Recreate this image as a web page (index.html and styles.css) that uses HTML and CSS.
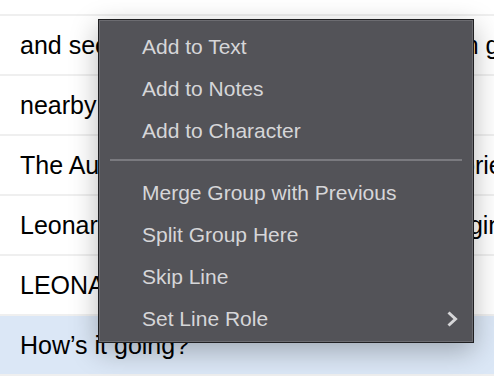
FILE: index.html
```html
<!DOCTYPE html>
<html>

<head>
    <title>Script Lines</title>
    <meta name="viewport" content="width=device-width, initial-scale=1.0">
    <link rel="stylesheet" href="styles.css">
</head>

<body>
    <div class="line-list">
        <div class="line-row">and see what was going on in the canyon gorge below</div>
        <div class="line-row">nearby and watched quietly</div>
        <div class="line-row">The Automated Theatre of Wonderful Stories</div>
        <div class="line-row">Leonard looks all around as the show begins</div>
        <div class="line-row">LEONARD</div>
        <div class="line-row selected">How’s it going?</div>
    </div>

    <!-- context menu over the selected line -->
    <div class="context-menu">
        <div class="menu-item">Add to Text</div>
        <div class="menu-item">Add to Notes</div>
        <div class="menu-item">Add to Character</div>
        <div class="menu-separator"></div>
        <div class="menu-item">Merge Group with Previous</div>
        <div class="menu-item">Split Group Here</div>
        <div class="menu-item">Skip Line</div>
        <div class="menu-item has-submenu">
            <span>Set Line Role</span>
            <svg class="chevron" width="14" height="18" viewBox="0 0 14 18">
                <path d="M3.5 2.5 L10.5 9 L3.5 15.5" fill="none" stroke="#d6d6d8" stroke-width="3" />
            </svg>
        </div>
    </div>
</body>

</html>
```

FILE: styles.css
```css
/* Basic styling */
body {
    font-family: "Liberation Sans", Arial, sans-serif;
    margin: 0;
    background: #fff;
    overflow: hidden;
}

/* Line list */
.line-list {
    margin-top: 14px;
    border-top: 2px solid #efefef;
}

.line-row {
    height: 58px;
    line-height: 58px;
    padding-left: 20px;
    font-size: 25px;
    color: #000;
    border-bottom: 2px solid #efefef;
    white-space: nowrap;
    overflow: hidden;
}

.line-row.selected {
    background-color: #dbe7f6;
}

/* Context menu */
.context-menu {
    position: absolute;
    left: 98px;
    top: 19px;
    width: 374px;
    padding: 6px 0 2px;
    background-color: #535358;
    border: 1px solid #1f1f21;
    box-shadow: inset 0 0 0 1px #6c6c71, 0 8px 26px rgba(0, 0, 0, 0.28);
    color: #d6d6d8;
    font-size: 21px;
}

.menu-item {
    height: 42px;
    line-height: 42px;
    padding-left: 43px;
    padding-right: 14px;
    white-space: nowrap;
}

.menu-item.has-submenu {
    display: flex;
    justify-content: space-between;
    align-items: center;
}

.menu-separator {
    height: 2px;
    margin: 7px 11px 11px 11px;
    background-color: #7a7a7f;
}
```
